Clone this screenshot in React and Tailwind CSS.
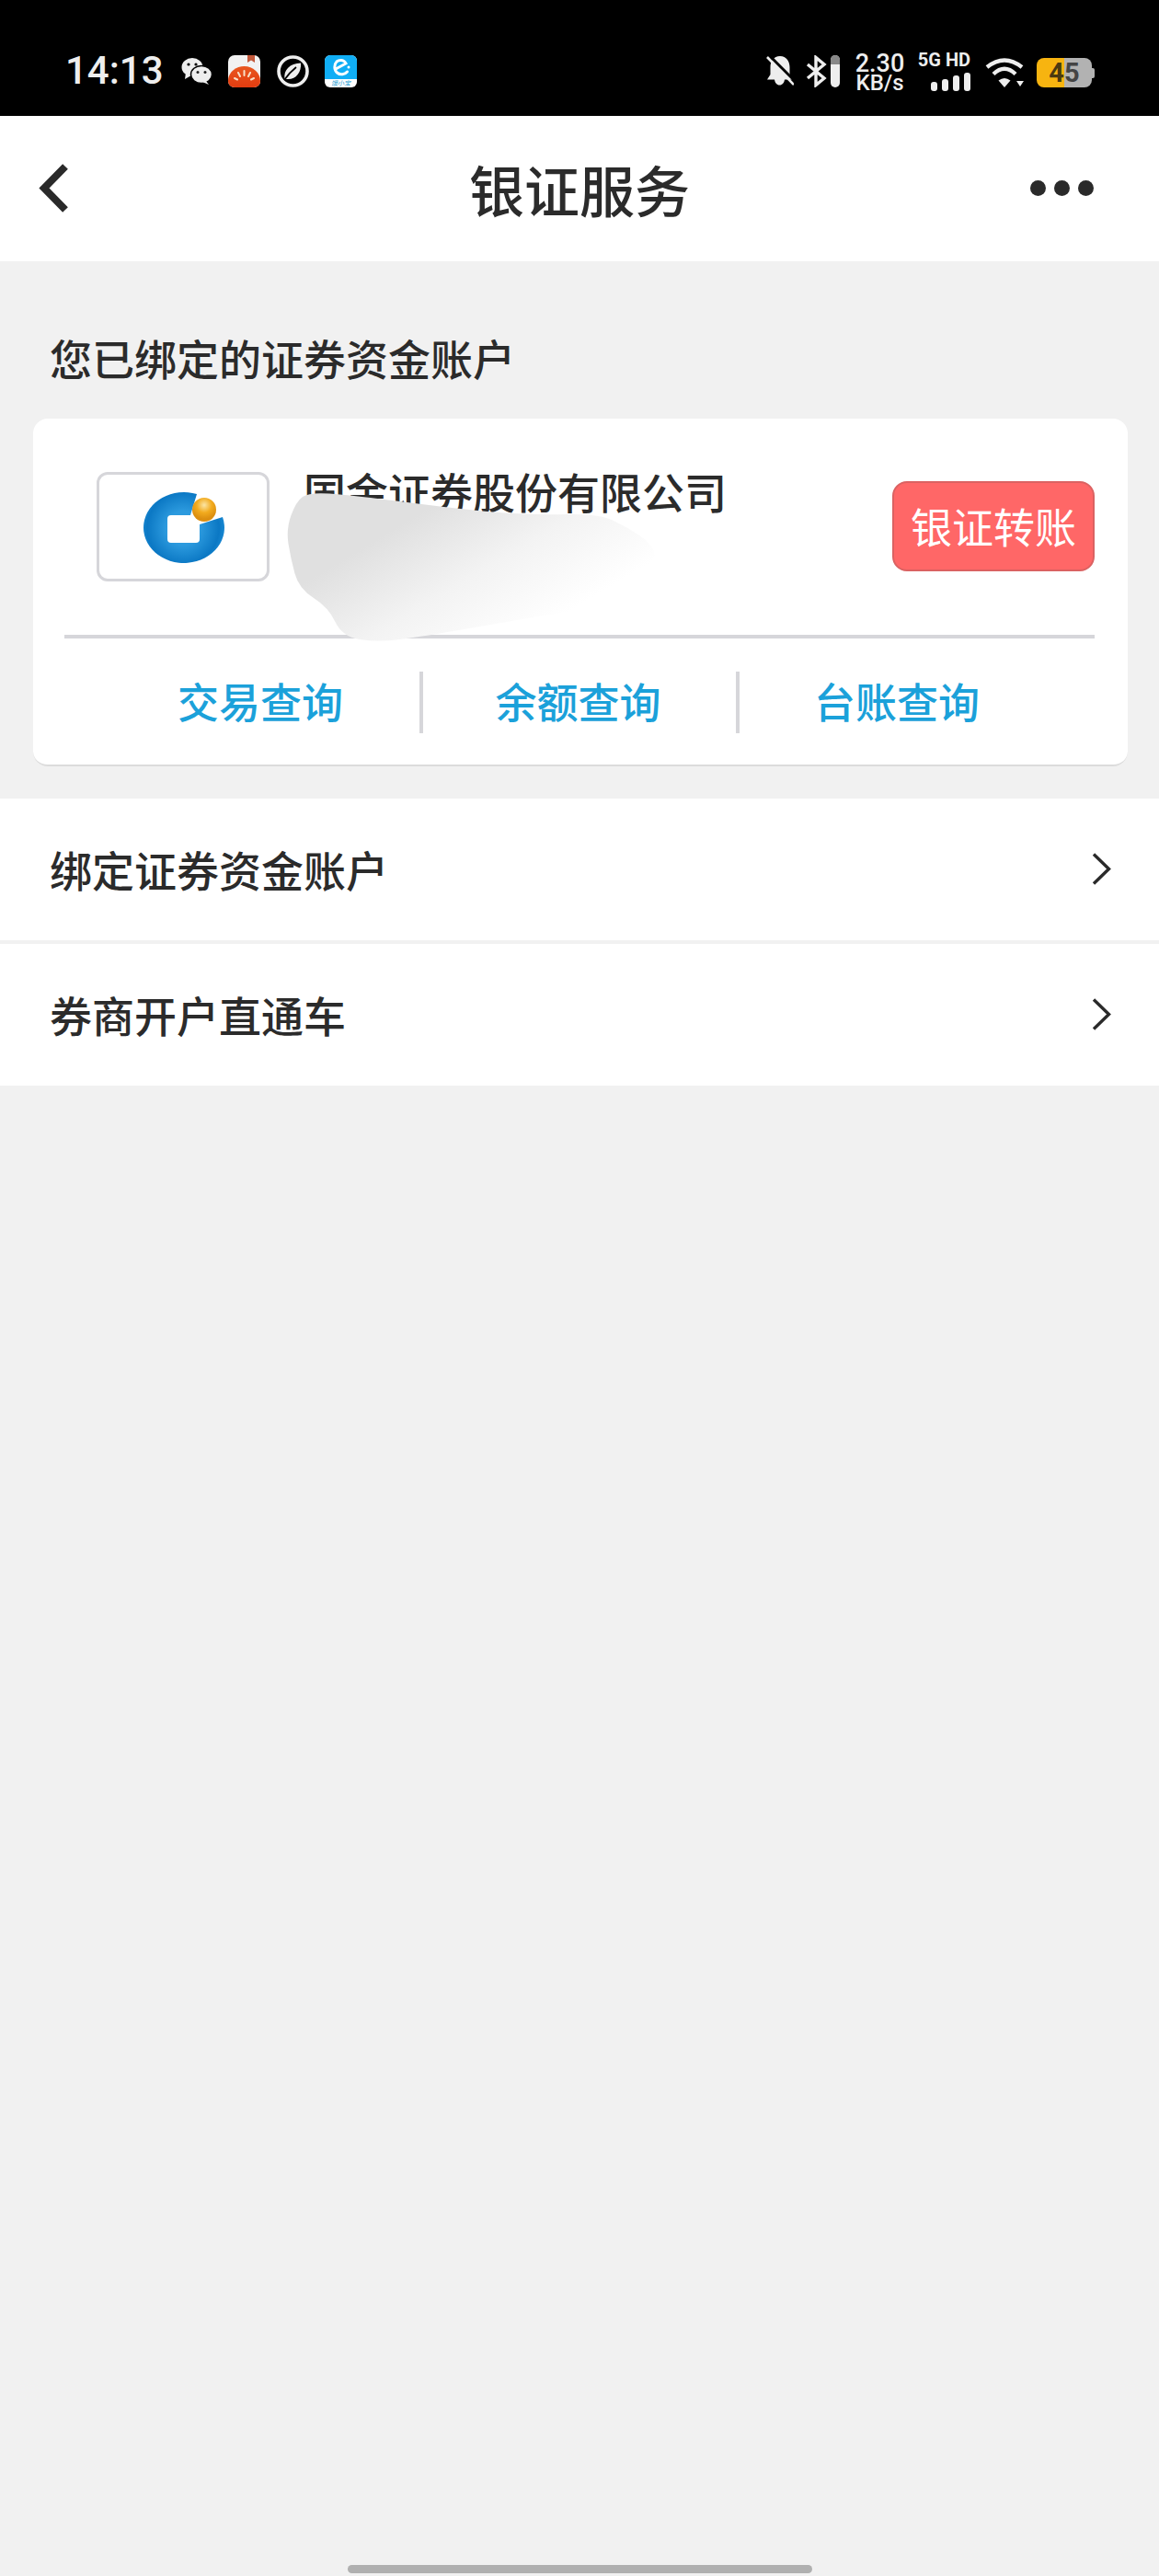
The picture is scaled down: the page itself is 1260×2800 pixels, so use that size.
import React from "react";

const CJK = "font-['Noto_Sans_CJK_SC','Noto_Sans',sans-serif]";

// rounds off a list of points into a closed curve
const smoothPath = (pts) => {
  const mid = (a, b) => [(a[0] + b[0]) / 2, (a[1] + b[1]) / 2];
  const start = mid(pts[pts.length - 1], pts[0]);
  let d = `M${start[0]} ${start[1]}`;
  pts.forEach((p, i) => {
    const m = mid(p, pts[(i + 1) % pts.length]);
    d += ` Q${p[0]} ${p[1]} ${m[0]} ${m[1]}`;
  });
  return d + " Z";
};

const SMEAR = [
  [311, 575], [322, 545], [336, 535], [380, 538], [513, 555], [583, 560], [650, 558], [682, 573],
  [710, 592], [714, 615], [703, 630], [667, 657], [567, 673], [460, 692], [410, 698], [372, 692],
  [357, 660], [325, 640], [316, 607],
];

function WeChatIcon() {
  return (
    <svg width="33" height="29" viewBox="0 0 33 29" className="mt-[3px]">
      <ellipse cx="12" cy="10" rx="11.5" ry="10" fill="#eee" />
      <path d="M5 16 L4 23 L11 19 Z" fill="#eee" />
      <circle cx="8" cy="7" r="1.6" fill="#000" />
      <circle cx="16" cy="7" r="1.6" fill="#000" />
      <ellipse cx="22" cy="18" rx="11.5" ry="9.5" fill="#eee" stroke="#000" strokeWidth="1.5" />
      <path d="M27 25 L30 29 L23 26 Z" fill="#eee" />
      <circle cx="18" cy="15.5" r="1.5" fill="#222" />
      <circle cx="26" cy="15.5" r="1.5" fill="#222" />
    </svg>
  );
}

function TomatoIcon() {
  return (
    <svg width="35" height="35" viewBox="0 0 35 35">
      <defs>
        <linearGradient id="tomato" x1="0" y1="0" x2="0" y2="1">
          <stop offset="0" stopColor="#e9571f" />
          <stop offset="1" stopColor="#e23c10" />
        </linearGradient>
      </defs>
      <rect width="35" height="35" rx="7" fill="#f2f2f2" />
      <path d="M0 28 C0 19 8 12 17.5 12 C27 12 35 19 35 28 C35 32 32 35 28 35 H7 C3 35 0 32 0 28 Z" fill="url(#tomato)" />
      <path d="M21 0 H29 V8 L25 5.5 L21 8 Z" fill="#c2583a" />
      <path d="M17.5 17 V22 M11 19 L13 23 M24 19 L22 23 M7 25 L10 26.5 M28 25 L25 26.5" stroke="#f8e0c8" strokeWidth="2" strokeLinecap="round" />
    </svg>
  );
}

function LeafIcon() {
  return (
    <svg width="35" height="35" viewBox="0 0 35 35">
      <circle cx="17.5" cy="17.5" r="15.5" fill="none" stroke="#eee" strokeWidth="3.6" />
      <path d="M8.5 26 C7 16 14 9 26 8.5 C27 19 20 27 11 26 Z" fill="#eee" />
      <path d="M8 27 C12 21 16 17 21 13" fill="none" stroke="#000" strokeWidth="1.8" />
    </svg>
  );
}

function ElemeIcon() {
  return (
    <div className="w-[35px] h-[35px] rounded-[6px] overflow-hidden flex flex-col bg-white">
      <div className="h-[26px] bg-[#10aef5] flex items-center justify-center">
        <svg width="22" height="22" viewBox="0 0 22 22">
          <path d="M5 13 L16 7 C14 3 9 2.5 6 5 C3 8 3 14 6.5 17 C10 20 15 19 17.5 16" fill="none" stroke="#fff" strokeWidth="3" strokeLinecap="round" />
          <circle cx="19" cy="11" r="1.5" fill="#fff" />
        </svg>
      </div>
      <div className={`flex-1 flex items-center justify-center text-[7px] leading-none italic text-[#1a9ad0] ${CJK}`}>饿小宝</div>
    </div>
  );
}

function BellOffIcon() {
  return (
    <svg width="30" height="33" viewBox="0 0 30 33">
      <path d="M15 1 C22 1 25.5 7 25.5 13 V21 L28.5 26.5 H20 C19.5 30 17.5 32.5 14.5 32.5 C11.5 32.5 9.5 30 9 26.5 H1 L4.5 21 V13 C4.5 7 8 1 15 1 Z" fill="#eee" />
      <path d="M3 0 L33 30" stroke="#000" strokeWidth="3" />
      <path d="M1 2 L30 32" stroke="#eee" strokeWidth="2.6" />
    </svg>
  );
}

function BluetoothIcon() {
  return (
    <svg width="23" height="35" viewBox="0 0 23 35" fill="none">
      <path d="M2 10 L20 25 L11 32.5 V2.5 L20 10 L2 25" stroke="#eee" strokeWidth="3.4" />
    </svg>
  );
}

function WifiIcon() {
  return (
    <svg width="42" height="33" viewBox="0 0 42 33" className="mt-[2px]" fill="none">
      <path d="M2 11 Q21 -4 40 11" stroke="#eee" strokeWidth="4.4" />
      <path d="M9 18.5 Q21 7 33 18.5" stroke="#eee" strokeWidth="4.4" />
      <path d="M14.5 25.5 Q21 20.5 27.5 25.5 L21 33 Z" fill="#eee" />
      <path d="M34 26 H42 L38 32 Z" fill="#eee" />
    </svg>
  );
}

function Battery() {
  return (
    <div className="flex items-center mt-[3px]">
      <div className="relative w-[60px] h-[32px] rounded-[8px] overflow-hidden flex font-['Roboto',sans-serif] font-bold text-[29px] leading-[32px]">
        <div className="w-[30px] bg-[#f7b410] text-[#4b3a10] text-right">4</div>
        <div className="flex-1 bg-[#b2b2b2] text-[#444]">5</div>
      </div>
      <div className="w-[3px] h-[11px] bg-[#b2b2b2] rounded-r-[2px]" />
    </div>
  );
}

function StatusBar() {
  return (
    <div className="h-[126px] bg-black flex items-start pt-[60px] pl-[71px] pr-[70px] font-['Roboto',sans-serif] text-[#eee]">
      <div className="w-[104px] text-[42px] leading-[34px] font-medium whitespace-nowrap">14:13</div>
      <div className="ml-[22px] flex items-start">
        <WeChatIcon />
        <div className="ml-[18px]"><TomatoIcon /></div>
        <div className="ml-[18px]"><LeafIcon /></div>
        <div className="ml-[17px]"><ElemeIcon /></div>
      </div>
      <div className="ml-auto flex items-start">
        <BellOffIcon />
        <div className="ml-[13px]"><BluetoothIcon /></div>
        <div className="ml-[4px] w-[10px] h-[35px] rounded-full overflow-hidden bg-[#eee]">
          <div className="h-[10px] bg-[#888]" />
        </div>
        <div className="ml-[17px] w-[53px] -mt-[3px] flex flex-col items-center">
          <div className="text-[27px] leading-[24px] font-medium">2.30</div>
          <div className="text-[24px] leading-[19px] font-medium">KB/s</div>
        </div>
        <div className="ml-[16px] w-[56px] -mt-[3px] flex flex-col items-end">
          <div className="text-[20px] leading-[17px] font-bold whitespace-nowrap">5G HD</div>
          <div className="mt-[5px] flex items-end gap-[5px] h-[20px]">
            <div className="w-[7px] h-[10px] rounded-[3px] bg-[#eee]" />
            <div className="w-[7px] h-[13px] rounded-[3px] bg-[#eee]" />
            <div className="w-[7px] h-[17px] rounded-[3px] bg-[#eee]" />
            <div className="w-[7px] h-[20px] rounded-[3px] bg-[#eee]" />
          </div>
        </div>
        <div className="ml-[16px]"><WifiIcon /></div>
        <div className="ml-[14px]"><Battery /></div>
      </div>
    </div>
  );
}

function Header() {
  return (
    <div className="relative h-[158px] bg-white flex items-center justify-center">
      <svg width="33" height="53" viewBox="0 0 33 53" fill="none" className="absolute left-[42px] top-[52px]">
        <path d="M29 3 L6 26.5 L29 50" stroke="#2a2a2a" strokeWidth="8" />
      </svg>
      <h1 className={`text-[60px] leading-[70px] font-medium text-[#2b2b2b] ${CJK}`}>银证服务</h1>
      <div className="absolute right-[71px] top-[70px] flex gap-[9px]">
        <div className="w-[17px] h-[17px] rounded-full bg-[#2a2a2a]" />
        <div className="w-[17px] h-[17px] rounded-full bg-[#2a2a2a]" />
        <div className="w-[17px] h-[17px] rounded-full bg-[#2a2a2a]" />
      </div>
    </div>
  );
}

function BankLogo() {
  return (
    <svg width="182" height="113" viewBox="108 516 182 113">
      <defs>
        <radialGradient id="ring" cx="199" cy="574" r="46" gradientUnits="userSpaceOnUse">
          <stop offset="0.4" stopColor="#2c9ade" />
          <stop offset="0.85" stopColor="#0b78c4" />
          <stop offset="1" stopColor="#1a8ad4" />
        </radialGradient>
        <radialGradient id="ball" cx="222" cy="549" r="15" gradientUnits="userSpaceOnUse">
          <stop offset="0" stopColor="#fbe5a5" />
          <stop offset="0.55" stopColor="#f2ab1e" />
          <stop offset="1" stopColor="#dc8f10" />
        </radialGradient>
      </defs>
      <path
        d="M214 537 A44 38.5 0 1 0 242 562 L217 570 V586 Q217 590 213 590 H186 Q182 590 182 586 V564 Q182 560 186 560 H207 Z"
        fill="url(#ring)"
      />
      <circle cx="222" cy="554" r="13" fill="url(#ball)" />
    </svg>
  );
}

function AccountCard() {
  return (
    <div className="relative ml-[36px] mr-[34px] h-[378px] bg-white rounded-[16px] border-b-2 border-[#dcdcdc] overflow-hidden">
      <div className="h-[235px] flex items-start pt-[58px] pl-[69px] pr-[36px]">
        <div className="w-[188px] h-[119px] rounded-[12px] border-[3px] border-[#d6d6da] flex items-center justify-center">
          <BankLogo />
        </div>
        <div className={`ml-[37px] -mt-[10px] text-[46px] leading-[60px] font-medium text-[#2b2b2b] whitespace-nowrap ${CJK}`}>国金证券股份有限公司</div>
        <button className={`ml-auto mt-[10px] w-[220px] h-[98px] rounded-[16px] bg-[#ff6767] border-2 border-[#db6262] text-white text-[45px] leading-[60px] ${CJK}`}>银证转账</button>
      </div>
      <div className="ml-[34px] mr-[36px] h-[4px] bg-[#d6d6da]" />
      <div className={`ml-[74px] h-[137px] flex items-center text-[45px] leading-[60px] font-medium text-[#1ba1da] ${CJK}`}>
        <div className="w-[346px] -mt-[1px] text-center">交易查询</div>
        <div className="w-[4px] h-[67px] bg-[#d6d6da] mt-[1px]" />
        <div className="w-[340px] -mt-[1px] pr-[3px] text-center">余额查询</div>
        <div className="w-[4px] h-[67px] bg-[#d6d6da] mt-[1px]" />
        <div className="w-[342px] -mt-[1px] text-center">台账查询</div>
      </div>
      {/* painted over smear that hides the account number */}
      <svg width="1190" height="378" viewBox="36 455 1190 378" className="absolute left-0 top-0">
        <defs>
          <linearGradient id="smear" x1="470" y1="550" x2="560" y2="700" gradientUnits="userSpaceOnUse">
            <stop offset="0" stopColor="#e0e0e0" />
            <stop offset="0.5" stopColor="#f3f3f3" />
            <stop offset="1" stopColor="#ffffff" />
          </linearGradient>
        </defs>
        <path d={smoothPath(SMEAR)} fill="url(#smear)" />
      </svg>
    </div>
  );
}

function MenuRow({ label }) {
  return (
    <div className={`h-[154px] bg-white flex items-center justify-between pl-[54px] pr-[52px] text-[46px] leading-[60px] font-medium text-[#2b2b2b] ${CJK}`}>
      <span className="-mt-[3px]">{label}</span>
      <svg width="21" height="35" viewBox="0 0 21 35" fill="none" className="-mt-[1px]">
        <path d="M2 1.5 L18.5 17.5 L2 33.5" stroke="#2a2a2a" strokeWidth="3.4" />
      </svg>
    </div>
  );
}

export default function App() {
  return (
    <div className="w-[1260px] h-[2800px] bg-[#f1f1f1] flex flex-col">
      <StatusBar />
      <Header />
      <div className={`h-[171px] pt-[74px] pl-[54px] text-[46px] leading-[60px] font-medium text-[#2b2b2b] ${CJK}`}>您已绑定的证券资金账户</div>
      <AccountCard />
      <div className="mt-[35px] flex flex-col gap-[4px]">
        <MenuRow label="绑定证券资金账户" />
        <MenuRow label="券商开户直通车" />
      </div>
      <div className="mt-auto mb-[3px] mx-auto w-[505px] h-[9px] rounded-full bg-[#b0b0b0]" />
    </div>
  );
}
